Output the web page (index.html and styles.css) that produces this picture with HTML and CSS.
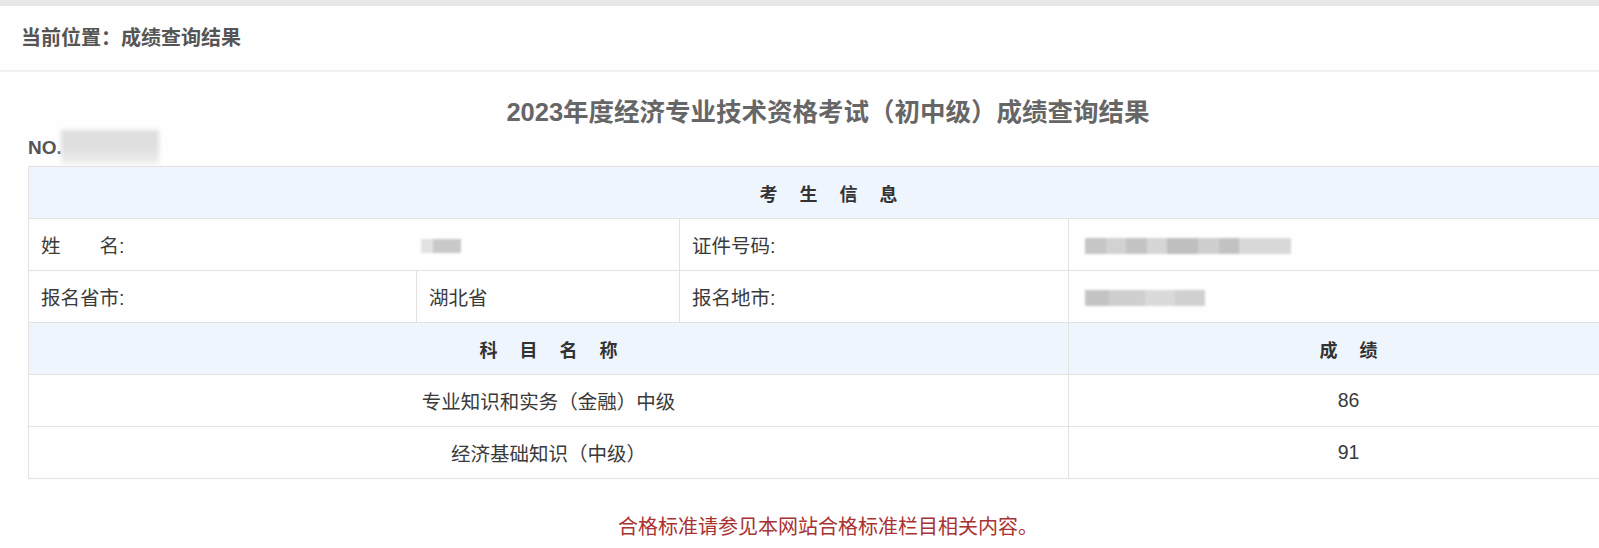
FILE: index.html
```html
<!DOCTYPE html>
<html lang="zh-CN">
<head>
<meta charset="utf-8">
<title>成绩查询结果</title>
<link rel="stylesheet" href="styles.css">
</head>
<body>
<div class="topbar"></div>
<div class="breadcrumb">当前位置：成绩查询结果</div>
<div class="main">
  <h1 class="title">2023年度经济专业技术资格考试（初中级）成绩查询结果</h1>
  <div class="no">NO.<span class="no-blur"></span></div>
  <table class="result">
    <colgroup>
      <col class="c1"><col class="c2"><col class="c3"><col class="c4">
    </colgroup>
    <tr class="head"><th colspan="4"><span class="spaced">考生信息</span></th></tr>
    <tr>
      <td class="nob">姓&emsp;&emsp;名:</td>
      <td><span class="blur blur-name"></span></td>
      <td>证件号码:</td>
      <td><span class="blur blur-id"></span></td>
    </tr>
    <tr>
      <td>报名省市:</td>
      <td>湖北省</td>
      <td>报名地市:</td>
      <td><span class="blur blur-city"></span></td>
    </tr>
    <tr class="head"><th colspan="3"><span class="spaced">科目名称</span></th><th><span class="spaced">成绩</span></th></tr>
    <tr class="score">
      <td colspan="3">专业知识和实务（金融）中级</td>
      <td>86</td>
    </tr>
    <tr class="score">
      <td colspan="3">经济基础知识（中级）</td>
      <td>91</td>
    </tr>
  </table>
  <p class="note">合格标准请参见本网站合格标准栏目相关内容。</p>
</div>
</body>
</html>
```

FILE: styles.css
```css
html, body {
  margin: 0;
  padding: 0;
  overflow: hidden;
  background: #fefefe;
}
body {
  font-family: "Liberation Sans", "Noto Sans CJK SC", sans-serif;
  color: #333;
}
.topbar {
  height: 6px;
  background: #e7e7e7;
}
.breadcrumb {
  box-sizing: border-box;
  height: 66px;
  line-height: 64px;
  padding-left: 21px;
  font-size: 20px;
  font-weight: bold;
  color: #555;
  border-bottom: 2px solid #f0f0f0;
}
.main {
  padding-left: 28px;
  width: 1600px;
}
.title {
  margin: 23px 0 0;
  font-size: 25.5px;
  line-height: 34px;
  font-weight: bold;
  color: #666;
  text-align: center;
}
.no {
  margin-top: 7px;
  height: 30px;
  line-height: 24px;
  font-size: 19px;
  font-weight: bold;
  color: #555;
  display: flex;
  align-items: flex-start;
}
.no-blur {
  display: inline-block;
  width: 98px;
  height: 34px;
  margin-top: -6px;
  margin-left: -1px;
  background: linear-gradient(180deg, #dedede 0%, #e0e0e0 55%, #efefef 100%);
  filter: blur(2px);
}
.result {
  width: 1600px;
  border-collapse: collapse;
  table-layout: fixed;
  font-size: 19.5px;
}
.c1 { width: 388px; }
.c2 { width: 263px; }
.c3 { width: 389px; }
.c4 { width: 560px; }
.result th, .result td {
  border: 1px solid #e2e2e2;
  height: 51px;
  padding: 0 12px;
  text-align: left;
  color: #3a3a3a;
  font-weight: normal;
}
.result tr.head th {
  background: #eef5fd;
  text-align: center;
  font-weight: bold;
  font-size: 18px;
  color: #333;
}
.spaced {
  letter-spacing: 22px;
  padding-left: 22px;
}
.result tr.score td {
  text-align: center;
}
.result td.nob {
  border-right-color: transparent;
}
.blur {
  display: inline-block;
  vertical-align: middle;
  height: 16px;
  filter: blur(1px);
}
.blur-name {
  width: 40px;
  height: 14px;
  margin-left: -8px;
  background: linear-gradient(90deg, #e2e2e2 0 30%, #c9c9c9 30% 100%);
}
.blur-id {
  width: 206px;
  margin-left: 4px;
  background: linear-gradient(90deg, #c6c6c6 0 10%, #d2d2d2 10% 20%, #c4c4c4 20% 30%, #d6d6d6 30% 40%, #bfbfbf 40% 55%, #cfcfcf 55% 65%, #c2c2c2 65% 75%, #d8d8d8 75% 100%);
}
.blur-city {
  width: 120px;
  margin-left: 4px;
  background: linear-gradient(90deg, #c4c4c4 0 20%, #cfcfcf 20% 50%, #dadada 50% 75%, #d0d0d0 75% 100%);
}
.note {
  margin: 34px 0 0;
  text-align: center;
  font-size: 20px;
  line-height: 28px;
  color: #a83232;
}
```
